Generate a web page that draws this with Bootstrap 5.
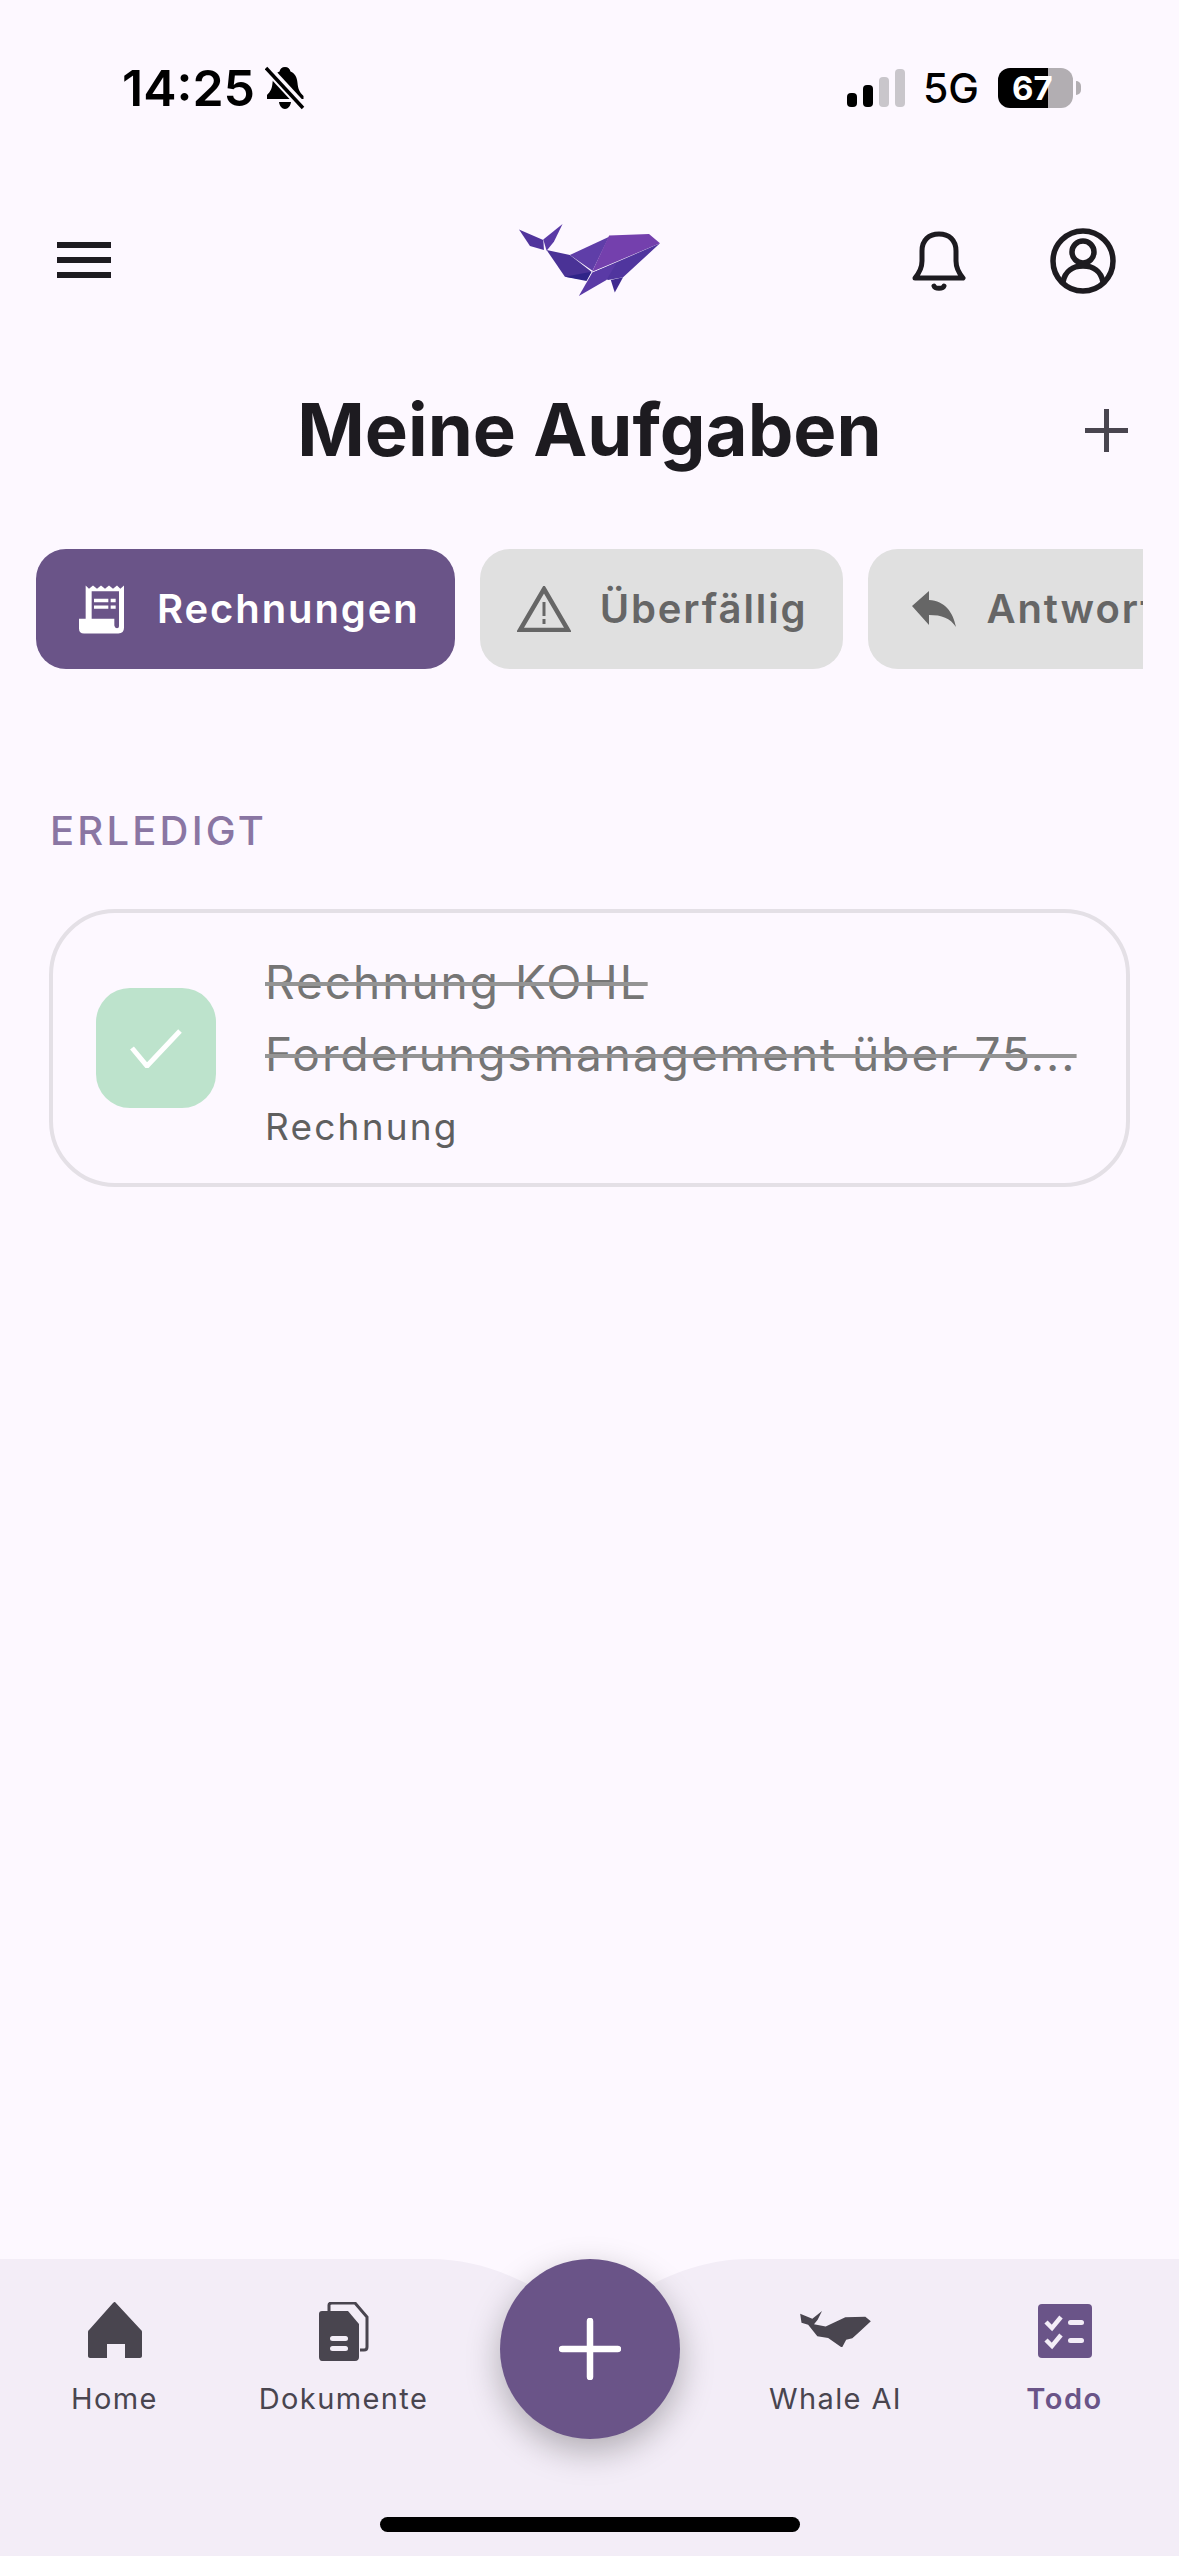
<!DOCTYPE html>
<html lang="de">
<head>
<meta charset="UTF-8">
<meta name="viewport" content="width=device-width, initial-scale=1.0">
<title>Meine Aufgaben</title>
<link rel="stylesheet" href="https://cdn.jsdelivr.net/npm/bootstrap@5.3.0/dist/css/bootstrap.min.css">
<style>
body { background: #fdf8ff; font-family: Inter, "Liberation Sans", sans-serif; }
.app-page { width: 1179px; height: 2556px; overflow: hidden; }
.status-row { height: 176px; padding: 0 98px 0 122px; color: #000; }
.status-time { font-size: 50px; font-weight: 600; line-height: 1; margin-right: 10px; }
.status-net { font-size: 41px; font-weight: 500; line-height: 1; margin: 0 19px 0 18px; }
.batt { width: 75px; height: 40px; border-radius: 12px; background: linear-gradient(90deg, #000 50px, #b2aeb2 50px); color: #fff; font-size: 33px; font-weight: 700; line-height: 40px; padding-left: 14px; }
.batt-nub { width: 5px; height: 14px; background: #b2aeb2; border-radius: 0 5px 5px 0; margin-left: 3px; }
.head-row { height: 170px; display: grid; grid-template-columns: 1fr auto 1fr; padding: 0 63px 0 57px; }
.title-row { height: 123px; margin-top: 23px; display: grid; grid-template-columns: 1fr auto 1fr; padding: 0 51px; }
.title-row h1 { font-size: 72.5px; font-weight: 700; color: #1d1b20; margin: 0; line-height: 1; }
.chip-row { margin: 57px 36px 0; overflow: hidden; gap: 25px; }
.chip-item { height: 120px; border-radius: 30px; background: #e0e0e0; color: #666; font-size: 40px; font-weight: 600; letter-spacing: 1.9px; white-space: nowrap; flex: none; line-height: 1; }
.chip-item.is-on { background: #6a5488; color: #fff; }
.done-label { margin: 142px 0 0 50px; font-size: 40px; font-weight: 500; line-height: 1; letter-spacing: 3.2px; color: #8a76a3; }
.task-box { margin: 58px 49px 0 49px; height: 278px; border: 4px solid #e4e0e6; border-radius: 66px; background: transparent; padding: 0 0 0 43px; gap: 49px; }
.check-box { width: 120px; height: 120px; border-radius: 34px; background: #bde3cc; flex: none; }
.task-title { font-size: 46px; line-height: 72px; color: #757575; text-decoration: line-through; text-decoration-color: #949494; text-decoration-thickness: 4px; letter-spacing: 2px; white-space: nowrap; }
.task-sub { font-size: 37px; line-height: 1; color: #5f5f5f; letter-spacing: 2.2px; margin-top: 18px; padding-bottom: 5px; box-sizing: content-box; }
.bottom-bar { margin-top: auto; height: 297px; background: #f3edf7; position: relative; }
.notch-svg { position: absolute; left: 0; top: 0; }
.nav-cell { width: 229px; padding-top: 43px; height: 170px; flex: none; color: #49454f; font-size: 29px; letter-spacing: 1.4px; line-height: 1; }
.nav-cell.is-on { color: #6a5488; font-weight: 600; letter-spacing: 1.5px; }
.nav-icon { height: 68px; margin-bottom: 14px; }
.fab-gap { width: 263px; flex: none; }
.fab-btn { position: absolute; left: 500px; top: 0; width: 180px; height: 180px; border-radius: 50%; border: 0; background: #6a5488; box-shadow: 0 12px 34px rgba(0,0,0,.28); }
.home-bar { position: absolute; left: 380px; top: 258px; width: 420px; height: 15px; border-radius: 8px; background: #000; }
</style>
</head>
<body>
<div class="app-page d-flex flex-column">

    <!-- Statusleiste -->
    <div class="status-row d-flex align-items-center">
        <span class="status-time">14:25</span>
        <svg width="40" height="44" viewBox="0 0 40 44"><path d="M20 1c3 0 5 2 5.500 4.500C30 7.500 32 11 32.500 17c.5 6 2 9 6 13v3H2v-4c4-4 5-7 5.500-12S10 7 14.500 5.500C15 3 17 1 20 1zM14 36h12c-.5 4-3 7-6 7s-5.500-3-6-7z" fill="#000"/><path d="M2 2l37 40" stroke="#fdf8ff" stroke-width="9"/><path d="M1 2l37 40" stroke="#000" stroke-width="3.500"/></svg>
        <span class="ms-auto d-flex align-items-end" style="height:38px">
            <svg width="58" height="38" viewBox="0 0 58 38"><rect x="0" y="24" width="10" height="14" rx="4" fill="#000"/><rect x="16" y="16" width="10" height="22" rx="4" fill="#000"/><rect x="32" y="8" width="10" height="30" rx="4" fill="#c9c6cb"/><rect x="48" y="0" width="10" height="38" rx="4" fill="#c9c6cb"/></svg>
        </span>
        <span class="status-net">5G</span>
        <div class="batt">67</div>
        <div class="batt-nub"></div>
    </div>

    <!-- Kopf -->
    <div class="head-row align-items-center">
        <svg width="54" height="36" viewBox="0 0 54 36" style="margin-top:-2px"><rect width="54" height="6" fill="#1d1b20"/><rect y="15" width="54" height="6" fill="#1d1b20"/><rect y="30" width="54" height="6" fill="#1d1b20"/></svg>
        <svg width="141" height="72" viewBox="117 72 424 216" style="margin:-2px 0 0 6px">
            <polygon points="117,88 190,120 192,150 150,138" fill="#50349c"/>
            <polygon points="248,72 190,118 200,152 222,125" fill="#5a3aa6"/>
            <polygon points="200,150 270,165 335,215 320,240 255,230" fill="#4a3296"/>
            <polygon points="255,230 335,215 320,243" fill="#2f2488"/>
            <polygon points="270,165 388,110 338,212" fill="#5f3ea8"/>
            <polygon points="388,106 508,102 541,130 337,215" fill="#7440ad"/>
            <polygon points="541,130 470,195 430,232 385,240 337,218" fill="#50359e"/>
            <polygon points="410,190 337,218 297,288 380,240" fill="#5a3aa6"/>
            <polygon points="393,240 430,232 405,278" fill="#3f2a90"/>
        </svg>
        <div class="d-flex justify-content-end align-items-center" style="gap:84px">
            <svg width="54" height="60" viewBox="0 0 54 60" fill="none" stroke="#1d1b20" stroke-width="5"><path d="M3 47c5-6 7-10 7-17V20C10 9 17 3 27 3s17 6 17 17v10c0 7 2 11 7 17z" stroke-linejoin="round"/><path d="M22 55c1 3 9 3 10 0" stroke-width="5" stroke-linecap="round"/></svg>
            <svg width="66" height="66" viewBox="0 0 66 66" fill="none" stroke="#1d1b20" stroke-width="5.500"><circle cx="33" cy="33" r="30"/><circle cx="33" cy="24" r="11"/><path d="M13 54c2-11 10-16 20-16s18 5 20 16"/></svg>
        </div>
    </div>

    <!-- Titel -->
    <div class="title-row align-items-center">
        <span></span>
        <h1>Meine Aufgaben</h1>
        <svg class="ms-auto" width="43" height="43" viewBox="0 0 43 43"><path d="M21.500 0v43M0 21.500h43" stroke="#49454f" stroke-width="5"/></svg>
    </div>

    <!-- Filter -->
    <div class="chip-row d-flex">
        <div class="chip-item is-on d-flex align-items-center" style="padding:0 35px 0 43px;gap:33px">
            <svg width="45" height="49" viewBox="30 27 135 146"><path d="M50 28l10 10 12-10 12 10 12-10 12 10 12-10 12 10 12-10 10 10 11-10v127q0 17-17 17H45q-15 0-15-15v-29h20z" fill="#fff"/><path d="M68 45h82v105q0 6-6 6-7 0-8-8v-20H68z" fill="#6a5488"/><path d="M75 68h43v10H75zM125 68h15v10h-15zM75 88h43v10H75zM125 88h15v10h-15z" fill="#fff"/></svg>
            <span>Rechnungen</span>
        </div>
        <div class="chip-item d-flex align-items-center" style="padding:0 35px 0 37px;gap:29px">
            <svg width="54" height="46" viewBox="0 0 54 46"><path d="M27 3l24 41H3z" fill="none" stroke="#666" stroke-width="4.500"/><path d="M25.500 16h3v14h-3zM25.500 33h3v5h-3z" fill="#666"/></svg>
            <span>Überfällig</span>
        </div>
        <div class="chip-item d-flex align-items-center" style="padding:0 37px 0 44px;gap:31px">
            <svg width="44" height="36" viewBox="0 0 44 36"><path d="M0 15L17 0v9c16 1 24 12 27 27-6-9-14-12-27-12v10z" fill="#666"/></svg>
            <span>Antworten</span>
        </div>
    </div>

    <div class="done-label">ERLEDIGT</div>

    <!-- Aufgabe -->
    <div class="card task-box flex-row align-items-center">
        <div class="check-box d-flex align-items-center justify-content-center">
            <svg width="52" height="40" viewBox="0 0 52 40" fill="none"><path d="M2 20l15 18L50 3" stroke="#fff" stroke-width="5"/></svg>
        </div>
        <div>
            <div class="task-title">Rechnung KOHL<br>Forderungsmanagement über 75...</div>
            <div class="task-sub">Rechnung</div>
        </div>
    </div>

    <!-- Navigation unten -->
    <div class="bottom-bar d-flex">
        <svg class="notch-svg" width="1179" height="60" viewBox="0 0 1179 60"><path d="M430 0c40 0 75 12 110 32h100c35-20 70-32 110-32z" fill="#fdf8ff"/></svg>
        <div class="nav-cell d-flex flex-column align-items-center">
            <div class="nav-icon d-flex align-items-end" style="padding-bottom:12px"><svg width="54" height="56" viewBox="0 0 54 56"><path d="M27 0l26 28c1 1 1 1 1 3v23c0 1-1 2-2 2H37V42H19V56H2c-1 0-2-1-2-2V31c0-2 0-2 1-3L25 1c1-1 1-1 2-1z" fill="#49454f"/></svg></div>
            <span>Home</span>
        </div>
        <div class="nav-cell d-flex flex-column align-items-center">
            <div class="nav-icon d-flex align-items-end" style="padding-bottom:9px"><svg width="50" height="59" viewBox="0 0 50 59"><path d="M10 9V3c0-1 1-2 3-2h23l12 14v30c0 2-1 3-3 3h-4" fill="none" stroke="#49454f" stroke-width="3"/><path d="M3 9h26l11 13v33c0 2-1 4-4 4H3c-2 0-3-2-3-4V12c0-2 1-3 3-3z" fill="#49454f"/><rect x="11" y="34" width="18" height="5" rx="2.500" fill="#f3edf7"/><rect x="11" y="44" width="18" height="5" rx="2.500" fill="#f3edf7"/></svg></div>
            <span>Dokumente</span>
        </div>
        <div class="fab-gap"></div>
        <div class="nav-cell d-flex flex-column align-items-center">
            <div class="nav-icon d-flex align-items-end" style="padding-bottom:23px"><svg width="71" height="36" viewBox="117 72 424 216"><path d="M117 88l73 30 58-46-26 53-22 27 70 13 118-55 120-4 33 28-71 65-40 37-37 8-25 48-83-58-65-10-55-70-40-12z" fill="#49454f"/></svg></div>
            <span>Whale AI</span>
        </div>
        <div class="nav-cell is-on d-flex flex-column align-items-center">
            <div class="nav-icon d-flex align-items-end" style="padding-bottom:12px"><svg width="54" height="54" viewBox="0 0 54 54"><rect width="54" height="54" rx="4" fill="#6a5488"/><path d="M8 18l6 6 9-11M8 36l6 6 9-11" fill="none" stroke="#f3edf7" stroke-width="4.500"/><rect x="30" y="16" width="16" height="5" rx="2.500" fill="#f3edf7"/><rect x="30" y="34" width="16" height="5" rx="2.500" fill="#f3edf7"/></svg></div>
            <span>Todo</span>
        </div>
        <button class="fab-btn d-flex align-items-center justify-content-center" type="button" aria-label="Neu">
            <svg width="62" height="62" viewBox="0 0 62 62"><path d="M31 3v56M3 31h56" stroke="#fff" stroke-width="6.500" stroke-linecap="round"/></svg>
        </button>
        <div class="home-bar"></div>
    </div>
</div>
<script src="https://cdn.jsdelivr.net/npm/bootstrap@5.3.0/dist/js/bootstrap.bundle.min.js"></script>
</body>
</html>
